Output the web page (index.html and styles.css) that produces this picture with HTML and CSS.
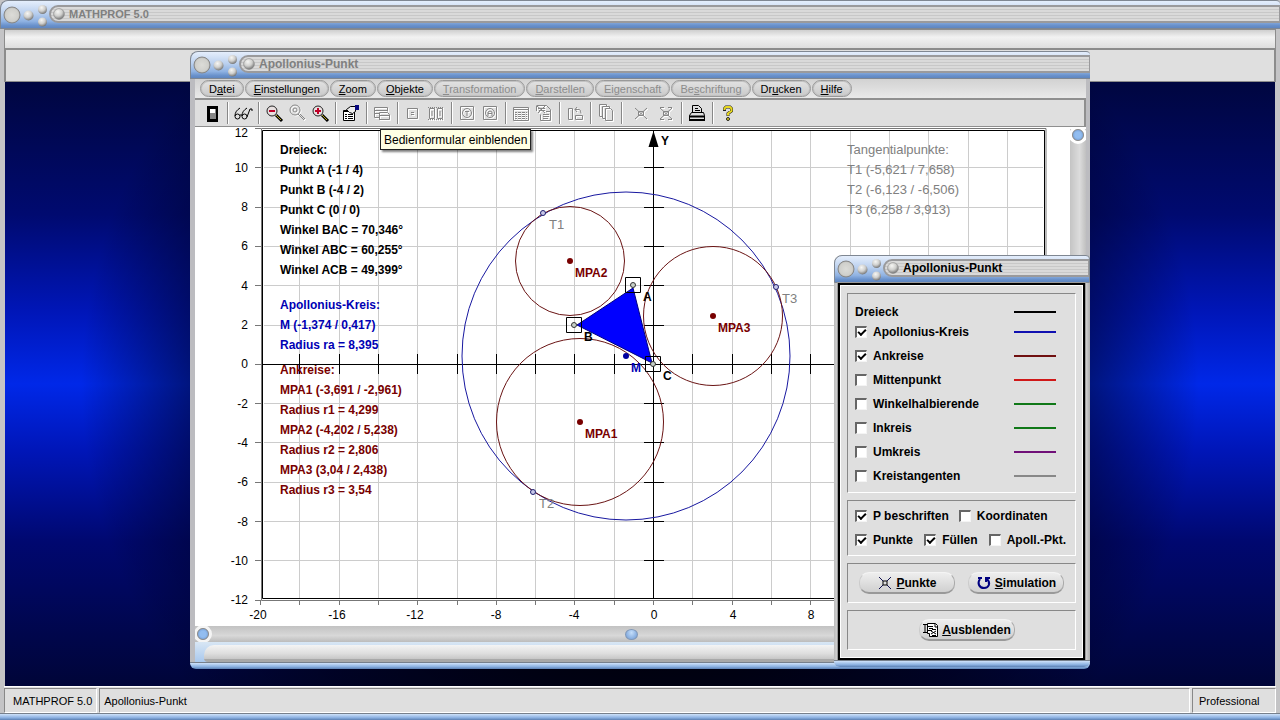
FILE: index.html
```html
<!DOCTYPE html>
<html lang="de">
<head>
<meta charset="utf-8">
<title>MATHPROF 5.0</title>
<link rel="stylesheet" href="styles.css">
</head>
<body>
<svg class="defs" aria-hidden="true">
  <defs>
    <radialGradient id="ball" cx="40%" cy="30%" r="70%">
      <stop offset="0" stop-color="#f6f6f4"/><stop offset=".55" stop-color="#cfcfcd"/><stop offset="1" stop-color="#777"/>
    </radialGradient>
    <radialGradient id="disc" cx="50%" cy="50%" r="50%">
      <stop offset="0" stop-color="#dcdcd8"/><stop offset=".8" stop-color="#cfcfcb"/><stop offset="1" stop-color="#b0b0ac"/>
    </radialGradient>
    <symbol id="knobs" viewBox="0 0 48 26">
      <circle cx="11" cy="13" r="8" fill="url(#disc)" stroke="#888" stroke-width="1"/>
      <circle cx="27.500" cy="13.500" r="5" fill="url(#ball)"/>
      <circle cx="41.500" cy="7.500" r="4.500" fill="url(#ball)"/>
      <circle cx="41.500" cy="20" r="4.500" fill="url(#ball)"/>
    </symbol>
    <symbol id="knob" viewBox="0 0 10 10"><circle cx="5" cy="5" r="4.500" fill="url(#ball)" stroke="#888" stroke-width=".5"/></symbol>
  </defs>
</svg>

<div class="app">
  <header class="titlebar">
    <svg class="knobs"><use href="#knobs"/></svg>
    <h1 class="caption"><svg class="knob"><use href="#knob"/></svg>MATHPROF 5.0</h1>
  </header>
  <div class="app-menu"></div>
  <div class="app-tools"></div>
  <main class="desktop"></main>
  <footer class="status">
    <span class="cell">MATHPROF 5.0</span>
    <span class="cell cell-main">Apollonius-Punkt</span>
    <span class="cell cell-edition">Professional</span>
  </footer>
  <div class="edge"></div>
</div>

<section class="window plot-window">
  <header class="titlebar">
    <svg class="knobs"><use href="#knobs"/></svg>
    <h2 class="caption"><svg class="knob"><use href="#knob"/></svg>Apollonius-Punkt</h2>
  </header>
  <div class="client">
    <nav class="menu">
      <button>D<u>a</u>tei</button><button><u>E</u>instellungen</button><button><u>Z</u>oom</button><button><u>O</u>bjekte</button><button disabled><u>T</u>ransformation</button><button disabled><u>D</u>arstellen</button><button disabled>Ei<u>g</u>enschaft</button><button disabled>Be<u>s</u>chriftung</button><button>Dr<u>u</u>cken</button><button><u>H</u>ilfe</button>
    </nav>
    <div class="tools">
      <div class="group"><button aria-label="Beenden"><svg viewBox="0 0 20 20"><path d="M5 3h11v16H5z" fill="#000"/><path d="M8 6h6v10H8z" fill="#888"/><path d="M8 6h5v4H8z" fill="#fff"/></svg></button></div>
      <div class="group"><button aria-label="Ansicht"><svg viewBox="0 0 20 20" class="ln"><circle cx="4.500" cy="13.500" r="2.500"/><circle cx="11.500" cy="13.500" r="2.500"/><path d="M2 13c0-4 2-6 5-8M9 13c0-4 2-6 5-8M14 14l3-8h2v2M7 12h2"/></svg></button></div>
      <div class="group">
        <button aria-label="Verkleinern"><svg viewBox="0 0 20 20"><circle cx="8" cy="8" r="5" fill="#e8e0e0" stroke="#222" stroke-width="1"/><path d="M5 8h6" stroke="#c00028" stroke-width="2"/><path d="M12 12l6 6" stroke="#000" stroke-width="3"/><path d="M12 12l5 5" stroke="#b8a820" stroke-width="1"/></svg></button>
        <button aria-label="Zoom aus" disabled><svg viewBox="0 0 20 20" class="off"><circle cx="8" cy="7" r="5"/><circle cx="8" cy="7" r="2"/><path d="M11 11l6 6M13 11l5 5"/></svg></button>
        <button aria-label="Vergrößern"><svg viewBox="0 0 20 20"><circle cx="8" cy="8" r="5" fill="#e8e0e0" stroke="#222" stroke-width="1"/><path d="M5 8h6M8 5v6" stroke="#c00028" stroke-width="2"/><path d="M12 12l6 6" stroke="#000" stroke-width="3"/><path d="M12 12l5 5" stroke="#b8a820" stroke-width="1"/></svg></button>
      </div>
      <div class="group"><button aria-label="Eigenschaften"><svg viewBox="0 0 20 20"><path d="M2.500 7.500h11v10h-11z" fill="#fff" stroke="#000"/><path d="M2 8.500h11M4 11.500h2M7 11.500h5M4 13.500h2M7 13.500h5M4 15.500h2M7 15.500h5" stroke="#000"/><path d="M5.500 6.500l4-3h5v5l-3 2-3-1z" fill="#eee" stroke="#000"/><path d="M14 2h4v5h-4z" fill="#0a0a80"/></svg></button></div>
      <div class="group"><button aria-label="Bedienformular einblenden" disabled><svg viewBox="0 0 20 20" class="off"><path d="M8 14.500H2.500v-10h13v4M2 7.500h13M2 10.500h6M7.500 10v7M7.500 9.500h8l2 2v5h-10zM8 12.500h9"/></svg></button></div>
      <div class="group">
        <button aria-label="Punkt" disabled><svg viewBox="0 0 20 20" class="off"><path d="M4.500 5.500h10v10h-10zM8 9.500h3M8 11.500h3"/></svg></button>
        <button aria-label="Punkte" disabled><svg viewBox="0 0 20 20" class="off"><path d="M3.500 5.500h5v10h-5zM11.500 5.500h5v10h-5zM6 8v5M14 8v5" /><path d="M2 4.500h16M2 16.500h16" stroke-dasharray="1 1"/></svg></button>
      </div>
      <div class="group">
        <button aria-label="Kreis T" disabled><svg viewBox="0 0 20 20" class="off"><path d="M3.500 3.500h13v13h-13z"/><circle cx="10" cy="10" r="4.500"/><path d="M8 8.500h4M10 8v5"/></svg></button>
        <button aria-label="Kreis A" disabled><svg viewBox="0 0 20 20" class="off"><path d="M3.500 3.500h13v13h-13z"/><circle cx="10" cy="10" r="4.500"/><path d="M8 13V9l2-1 2 1v4M8 10.500h4"/></svg></button>
      </div>
      <div class="group">
        <button aria-label="Tabelle" disabled><svg viewBox="0 0 20 20" class="off"><path d="M2.500 4.500h15v13h-15zM2 6.500h15M4 9.500h12M4 11.500h12M4 13.500h12M4 15.500h12"/><path d="M6.500 8v9M10.500 8v9M14.500 8v9" stroke="#dfdfdf"/></svg></button>
        <button aria-label="Skript" disabled><svg viewBox="0 0 20 20" class="off"><path d="M2.500 2.500h10l4 4v11h-10v-6M3 3l8 7M11 3L4 10M2.500 3v5M9 11.500h6M9 13.500h6M9 15.500h5M12 8.500h4M4 5.500h7M5 7.500h6"/></svg></button>
      </div>
      <div class="group"><button aria-label="Drehen" disabled><svg viewBox="0 0 20 20" class="off"><path d="M3.500 5.500h4v11h-4zM10.500 12.500h7v4h-7zM10 6.500h4q2 0 2 4M12 4l-2 2.500 2 2.500"/></svg></button></div>
      <div class="group"><button aria-label="Kopieren" disabled><svg viewBox="0 0 20 20" class="off"><path d="M9.500 5.500h5l2 2v10h-7zM6.500 15V3.500h7v2M3.500 13V1.500h7v2M3.500 13.500h3M6.500 15.500h3"/></svg></button></div>
      <div class="group group-wide">
        <button aria-label="Punkt löschen" disabled><svg viewBox="0 0 20 20" class="off"><path d="M4 5l12 11M16 5L4 16"/><path d="M7.500 8.500h5v4h-5z"/></svg></button>
        <button aria-label="Alles löschen" disabled><svg viewBox="0 0 20 20" class="off"><path d="M4 5l12 11M16 5L4 16M4 4.500h4M12 4.500h4M4 16.500h4M12 16.500h4"/><path d="M7.500 8.500h5v4h-5z"/></svg></button>
      </div>
      <div class="group"><button aria-label="Drucken"><svg viewBox="0 0 20 20" class="ln"><path d="M5.500 9V2.500h6l3 3V9M8 5.500h3M8 7.500h5M4.500 9.500h12l1 3v4h-15v-4z"/><path d="M2 13.500h16M2 17h16" stroke-width="2"/></svg></button></div>
      <div class="group"><button aria-label="Hilfe"><svg viewBox="0 0 20 20" fill="none"><path d="M6.500 8V5.500L8 4h4l1.500 1.500V8L10 10.500V13" stroke="#222" stroke-width="3"/><path d="M6.500 7V5.500L8 4h4l1.500 1.500V8L10 10.500v2" stroke="#e8d820" stroke-width="2"/><circle cx="10" cy="16" r="1.500" fill="#e8d820" stroke="#222"/></svg></button></div>
    </div>
    <div class="view">
      <svg class="plot" viewBox="195 127 875 499" role="img" aria-label="Apollonius-Kreis">
        <path class="grid" d="M299.500 131v467M339.500 131v467M378.500 131v467M417.500 131v467M457.500 131v467M496.500 131v467M535.500 131v467M574.500 131v467M614.500 131v467M692.500 131v467M732.500 131v467M771.500 131v467M810.500 131v467M850.500 131v467M889.500 131v467M928.500 131v467M968.500 131v467M1007.500 131v467"/>
        <path class="grid" d="M264 167.500h779M264 207.500h779M264 246.500h779M264 285.500h779M264 325.500h779M264 403.500h779M264 442.500h779M264 482.500h779M264 521.500h779M264 560.500h779"/>
        <path class="outer" d="M261.500 128.500h784.500v472H261.500z"/>
        <path class="outer" d="M255 128.500h6M255 167.500h6M255 207.500h6M255 246.500h6M255 285.500h6M255 325.500h6M255 364.500h6M255 403.500h6M255 442.500h6M255 482.500h6M255 521.500h6M255 560.500h6M255 600.500h6"/>
        <path class="outer" d="M260.500 600v5M299.500 600v5M339.500 600v5M378.500 600v5M417.500 600v5M457.500 600v5M496.500 600v5M535.500 600v5M574.500 600v5M614.500 600v5M653.500 600v5M692.500 600v5M732.500 600v5M771.500 600v5M810.500 600v5"/>
        <path class="frame" d="M262.500 130.500h782v468h-782z"/>
        <path class="axis" d="M262 364.500h781M653.500 130v468"/>
        <path class="axis" d="M299.500 354v20M339.500 354v20M378.500 354v20M417.500 354v20M457.500 354v20M496.500 354v20M535.500 354v20M574.500 354v20M614.500 354v20M692.500 354v20M732.500 354v20M771.500 354v20M810.500 354v20"/>
        <path class="axis" d="M644 167.500h20M644 207.500h20M644 246.500h20M644 285.500h20M644 325.500h20M644 403.500h20M644 442.500h20M644 482.500h20M644 521.500h20M644 560.500h20"/>
        <path d="M653.500 131l5 16h-10z"/>
        <circle class="blue-line" cx="626" cy="356" r="164"/>
        <g class="red-line"><circle cx="580" cy="422" r="83.500"/><circle cx="570" cy="261" r="54.500"/><circle cx="713" cy="316" r="69.500"/></g>
        <g class="bold"><text x="584" y="341">B</text></g>
        <path d="M633 288L577 325l75 38z" fill="#00f" stroke="#000080"/>
        <path class="axis" d="M625.500 277.500h15v15h-15zM566.500 317.500h15v15h-15zM645.500 356.500h15v15h-15z"/>
        <g class="node"><circle cx="633" cy="285" r="2.500"/><circle cx="574" cy="325" r="2.500"/><circle cx="653" cy="364" r="2.500"/></g>
        <g class="tangent"><circle cx="543" cy="213" r="2.500"/><circle cx="533" cy="492" r="2.500"/><circle cx="776" cy="287" r="2.500"/></g>
        <g class="dark"><circle cx="570" cy="261" r="3"/><circle cx="580" cy="422" r="3"/><circle cx="713" cy="316" r="3"/></g>
        <circle cx="626" cy="356" r="3" fill="#0000a0"/>
        <g class="bold"><text x="661" y="145">Y</text><text x="643" y="301">A</text><text x="663" y="380">C</text><text class="blue" x="631" y="372">M</text></g>
        <g class="bold dark"><text x="575" y="277">MPA2</text><text x="718" y="332">MPA3</text><text x="585" y="438">MPA1</text></g>
        <g class="gray"><text x="549" y="229">T1</text><text x="539" y="508">T2</text><text x="782" y="303">T3</text></g>
        <g class="bold">
          <text x="280" y="154">Dreieck:</text><text x="280" y="174">Punkt A (-1 / 4)</text><text x="280" y="194">Punkt B (-4 / 2)</text><text x="280" y="214">Punkt C (0 / 0)</text><text x="280" y="234">Winkel BAC = 70,346°</text><text x="280" y="254">Winkel ABC = 60,255°</text><text x="280" y="274">Winkel ACB = 49,399°</text>
        </g>
        <g class="bold blue"><text x="280" y="309">Apollonius-Kreis:</text><text x="280" y="329">M (-1,374 / 0,417)</text><text x="280" y="349">Radius ra = 8,395</text></g>
        <g class="bold dark">
          <text x="280" y="374">Ankreise:</text><text x="280" y="394">MPA1 (-3,691 / -2,961)</text><text x="280" y="414">Radius r1 = 4,299</text><text x="280" y="434">MPA2 (-4,202 / 5,238)</text><text x="280" y="454">Radius r2 = 2,806</text><text x="280" y="474">MPA3 (3,04 / 2,438)</text><text x="280" y="494">Radius r3 = 3,54</text>
        </g>
        <g class="gray"><text x="847" y="154">Tangentialpunkte:</text><text x="847" y="174">T1 (-5,621 / 7,658)</text><text x="847" y="194">T2 (-6,123 / -6,506)</text><text x="847" y="214">T3 (6,258 / 3,913)</text></g>
        <g class="scale-y"><text x="248" y="137">12</text><text x="248" y="172">10</text><text x="248" y="211">8</text><text x="248" y="250">6</text><text x="248" y="290">4</text><text x="248" y="329">2</text><text x="248" y="368">0</text><text x="248" y="408">-2</text><text x="248" y="447">-4</text><text x="248" y="486">-6</text><text x="248" y="526">-8</text><text x="248" y="565">-10</text><text x="248" y="604">-12</text></g>
        <g class="scale-x"><text x="258" y="619">-20</text><text x="337" y="619">-16</text><text x="415" y="619">-12</text><text x="496" y="619">-8</text><text x="574" y="619">-4</text><text x="654" y="619">0</text><text x="733" y="619">4</text><text x="811" y="619">8</text></g>
      </svg>
      <div class="vscroll"><span class="dot"></span></div>
    </div>
    <div class="hscroll"><span class="dot"></span><input type="range" aria-label="Horizontal verschieben" value="50"></div>
    <div class="strip"><div class="strip-bar"></div></div>
  </div>
  <div class="edge"></div>
  <div class="tooltip" role="tooltip">Bedienformular einblenden</div>
</section>

<section class="window dialog">
  <header class="titlebar">
    <svg class="knobs"><use href="#knobs"/></svg>
    <h2 class="caption"><svg class="knob"><use href="#knob"/></svg>Apollonius-Punkt</h2>
  </header>
  <form class="panel">
    <fieldset class="layers">
      <div class="row row-head">Dreieck<i class="key black"></i></div>
      <div class="row"><label><input type="checkbox" checked>Apollonius-Kreis</label><i class="key navy"></i></div>
      <div class="row"><label><input type="checkbox" checked>Ankreise</label><i class="key maroon"></i></div>
      <div class="row"><label><input type="checkbox">Mittenpunkt</label><i class="key red"></i></div>
      <div class="row"><label><input type="checkbox">Winkelhalbierende</label><i class="key green"></i></div>
      <div class="row"><label><input type="checkbox">Inkreis</label><i class="key green"></i></div>
      <div class="row"><label><input type="checkbox">Umkreis</label><i class="key purple"></i></div>
      <div class="row"><label><input type="checkbox">Kreistangenten</label><i class="key silver"></i></div>
    </fieldset>
    <fieldset class="options">
      <div class="opts"><label><input type="checkbox" checked>P beschriften</label><label><input type="checkbox">Koordinaten</label></div>
      <div class="opts opts-three"><label><input type="checkbox" checked>Punkte</label><label><input type="checkbox" checked>Füllen</label><label><input type="checkbox">Apoll.-Pkt.</label></div>
    </fieldset>
    <fieldset class="actions">
      <button type="button"><svg viewBox="0 0 16 16" fill="none" stroke="#101050"><path d="M2 2l4 4M14 2l-4 4M2 14l4-4M14 14l-4-4"/><path d="M6 6h4v4H6z" stroke="#000"/></svg><span><u>P</u>unkte</span></button>
      <button type="button"><svg viewBox="0 0 16 16" fill="none" stroke="#000080" stroke-width="2"><path d="M4 4C1 8 3 13 8 13s7-5 3-9"/><path d="M2 3h4M9 3h5M10 3v4" /></svg><span><u>S</u>imulation</span></button>
    </fieldset>
    <fieldset class="actions actions-close">
      <button type="button"><svg viewBox="0 0 16 16" fill="#fff" stroke="#000"><path d="M4.500 1.500h8l2 2v11h-8v-3h-2z"/><path d="M0 2.500h4M2 2v8M0 10.500h4M5 4.500h5M6 6.500h4M5 8.500h4M12 2v3h3M8 9l5 3M8 12l5-3M9 7.500h4M9 13.500h4" fill="none"/></svg><span><u>A</u>usblenden</span></button>
    </fieldset>
  </form>
  <div class="edge"></div>
</section>
</body>
</html>
```
FILE: styles.css
```css
* { box-sizing: border-box; }
body {
  margin: 0;
  position: relative;
  font: 11px/14px "Liberation Sans", Arial, sans-serif;
  color: #000;
  background: #8a8a8e;
}
h1, h2 { margin: 0; font-size: inherit; }
button, input { font: inherit; color: inherit; }
.defs { position: absolute; width: 0; height: 0; }

/* Window chrome */
.titlebar {
  display: flex;
  align-items: center;
  height: 28px;
  border: 1px solid #7f8792;
  border-right-width: 0;
  border-radius: 8px 4px 0 0;
  background: linear-gradient(#e4eefc 0, #d4e2f6 18%, #b9cfee 45%, #8fb2e2 75%, #6a92cc 90%, #5f86bf 100%);
}
.knobs { flex: none; width: 48px; height: 26px; }
.knob { flex: none; width: 12px; height: 12px; }
.caption {
  display: flex;
  align-items: center;
  flex: 1;
  gap: 4px;
  height: 18px;
  margin-bottom: 2px;
  padding-left: 2px;
  border: 2px solid #9a9a9c;
  border-right-width: 1px;
  border-radius: 9px 0 0 9px;
  background: repeating-linear-gradient(#dadada 0 2px, #c8c8c8 2px 3px);
  font-size: 12px;
  font-weight: bold;
  color: #808080;
}
.edge {
  height: 7px;
  border-top: 1px solid #77808c;
  border-radius: 0 0 6px 6px;
  background: linear-gradient(#cfe2fa, #8db2e2 60%, #5b80b4);
}

/* Application frame */
.app { display: flex; flex-direction: column; min-height: 100vh; background: #c4c4c6; }
.app > .titlebar { height: 29px; }
.app > .titlebar .caption { font-size: 11px; }
.app-menu {
  height: 21px;
  margin: 0 4px;
  border: solid #8c8c8c;
  border-width: 1px 1px 2px;
  background: linear-gradient(#cfcfcf, #f2f2f2 40%, #dedede);
}
.app-tools { height: 32px; margin: 0 4px; border: solid #8c8c8c; border-width: 0 2px 1px; background: #dfdfdf; }
.desktop {
  flex: 1;
  margin: 0 5px;
  background:
    radial-gradient(ellipse 44% 85% at 50% 50%, #00000a 50%, rgba(0, 0, 16, .5) 80%, rgba(0, 0, 30, 0) 100%),
    linear-gradient(#000640, #000a70 22%, #0016b8 38%, #0028e8 50%, #0016b8 61%, #000870 76%, #000538);
}
.status {
  display: flex;
  gap: 2px;
  height: 27px;
  margin: 0 4px;
  padding-top: 1px;
  background: #dfdfdf;
  border-top: 1px solid #fff;
}
.app > .edge { border-radius: 0; }
.cell {
  padding: 5px 4px 0 8px;
  border: 1px solid;
  border-color: #888 #fff #fff #888;
}
.cell-main { flex: 1; padding-left: 4px; }
.cell-edition { width: 84px; padding-left: 6px; }

/* Floating windows */
.window { position: absolute; display: flex; flex-direction: column; }
.plot-window { left: 190px; top: 51px; width: 900px; }
.client { border: solid #bcbcc0; border-width: 0 4px 0 5px; background: #dfdfdf; }
.menu {
  display: flex;
  gap: 1px;
  height: 21px;
  padding: 1px 5px;
  border-bottom: 2px solid #8f8f8f;
  background: linear-gradient(#d2d2d2, #e9e9e9);
}
.menu button {
  padding: 0 8px;
  border: 1px solid #999;
  border-radius: 9px;
  background: linear-gradient(#e2e2e2, #cacaca);
  box-shadow: inset 0 0 0 1px #c2c2c2;
}
.menu button:disabled { color: #8c8c8c; }
.tools { display: flex; height: 27px; padding: 2px 5px; border-right: 2px solid #8f8f8f; border-bottom: 1px solid #8f8f8f; }
.group { display: flex; }
.group + .group { margin-left: 4px; padding-left: 3px; border-left: 1px solid #888; box-shadow: inset 1px 0 #fff; }
.group-wide { gap: 2px; }
.group + .group-wide { padding-left: 7px; }
.tools button { width: 23px; padding: 0; border: 0; background: none; }
.tools svg { display: block; width: 20px; height: 20px; margin: auto; }
.ln { fill: none; stroke: #000; }
.off { fill: none; stroke: #858585; filter: drop-shadow(1px 1px 0 #fff); }

.view { display: flex; background: #fff; }
.plot { display: block; flex: 1; min-width: 0; font-size: 12px; }
.grid { stroke: #ccc; }
.outer { fill: none; stroke: #777; }
.frame { fill: none; stroke: #000; stroke-width: 1px; }
.axis { fill: none; stroke: #000; }
.blue-line { fill: none; stroke: #1818a0; }
.red-line { fill: none; stroke: #6a1414; }
.node { fill: #c8d0c8; stroke: #333; }
.tangent { fill: #c8c8e8; stroke: #202070; }
.bold { font-weight: bold; }
.blue { fill: #0000b4; }
.dark { fill: #780000; }
.gray { fill: #808080; font-size: 13px; }
.scale-y { text-anchor: end; }
.scale-x { text-anchor: middle; }

.vscroll { width: 16px; overflow: hidden; background: linear-gradient(90deg, #c4c4c4, #dcdcdc 60%, #c0c0c0); }
.dot {
  flex: none;
  display: block;
  width: 12px;
  height: 12px;
  border: 1px solid #8a8a8a;
  border-radius: 50%;
  background: radial-gradient(#92bdf0 40%, #6a95d0);
}
.vscroll::before { content: ""; display: block; height: 2px; background: #fff; }
.vscroll .dot { margin: 0 auto; box-shadow: 0 0 0 3px #fff; }
.hscroll {
  display: flex;
  align-items: center;
  height: 16px;
  padding-left: 2px;
  overflow: hidden;
  background: linear-gradient(#c2c2c2, #d8d8d8 60%, #bcbcbc);
}
.hscroll .dot { box-shadow: 0 0 0 3px #f4f4f4; }
.hscroll input { appearance: none; flex: 1; height: 12px; margin: 0 32px 0 0; background: none; }
.hscroll input::-webkit-slider-thumb {
  appearance: none;
  width: 13px;
  height: 11px;
  border: 1px solid #8098b8;
  border-radius: 50%;
  background: radial-gradient(at 50% 30%, #c4defa, #6c98d4);
}
.strip {
  height: 20px;
  padding: 3px 0 0 9px;
  background: linear-gradient(#d8e6f4, #a9c8ee);
}
.strip-bar {
  height: 17px;
  border-radius: 10px 0 0 4px;
  background: linear-gradient(#f4f4f4, #dedede 50%, #c8c8c8 80%, #a8a8a8 85%);
}

.tooltip {
  position: absolute;
  left: 190px;
  top: 78px;
  padding: 3px 3px 2px;
  border: 1px solid #222;
  background: #ffffe4;
  box-shadow: 2px 2px 2px rgba(0, 0, 0, .5);
  font-size: 12px;
}

/* Control dialog */
.dialog {
  left: 834px;
  top: 255px;
  width: 256px;
  border-radius: 8px 4px 6px 6px;
  background: linear-gradient(90deg, #bbb, #ddd 2%, #ddd 98%, #aaa);
  font-size: 12px;
  font-weight: bold;
}
.dialog .titlebar { border-right-width: 1px; }
.dialog .caption { color: #000; }
.panel {
  display: flex;
  flex-direction: column;
  gap: 7px;
  margin: 0 5px 0 4px;
  padding: 8px 7px;
  border: 2px solid #000;
  outline: 1px solid #999;
  box-shadow: inset 0 0 0 1px #fff;
  background: #dfdfdf;
}
fieldset {
  min-width: 0;
  margin: 0;
  padding: 3px 7px;
  border: 1px solid;
  border-color: #888 #fff #fff #888;
}
.layers { padding: 10px 7px 4px; }
.row { display: flex; align-items: center; justify-content: space-between; height: 24px; padding-right: 12px; }
.row-head { height: 16px; }
label { display: flex; align-items: center; gap: 6px; }
.key { width: 42px; height: 2px; background: #000; }
.navy { background: #1010b0; }
.maroon { background: #701010; }
.red { background: #d01818; }
.green { background: #107818; }
.purple { background: #701078; }
.silver { background: #888; }
input[type="checkbox"] {
  appearance: none;
  width: 12px;
  height: 12px;
  margin: 0;
  border: solid;
  border-width: 2px 1px 1px 2px;
  border-color: #666 #f4f4f4 #f4f4f4 #666;
  background: #fff;
}
input[type="checkbox"]:checked::before {
  content: "";
  display: block;
  width: 6px;
  height: 3px;
  margin: 1px 0 0 1px;
  border: solid #000;
  border-width: 0 0 2px 2px;
  transform: rotate(-45deg);
}
.opts { display: flex; align-items: center; gap: 10px; height: 24px; }
.opts-three { justify-content: space-between; padding-right: 2px; }
.actions { display: flex; justify-content: space-between; padding: 8px 11px; }
.actions button {
  display: flex;
  align-items: center;
  justify-content: center;
  gap: 3px;
  width: 96px;
  height: 22px;
  padding: 0;
  border: solid;
  border-width: 1px 1px 2px;
  border-color: #f4f4f4 #aaa #999 #ccc;
  border-radius: 10px;
  background: linear-gradient(#eee, #d0d0d0);
}
.actions svg { flex: none; width: 16px; height: 16px; }
.actions-close { justify-content: center; padding-left: 22px; }
```
